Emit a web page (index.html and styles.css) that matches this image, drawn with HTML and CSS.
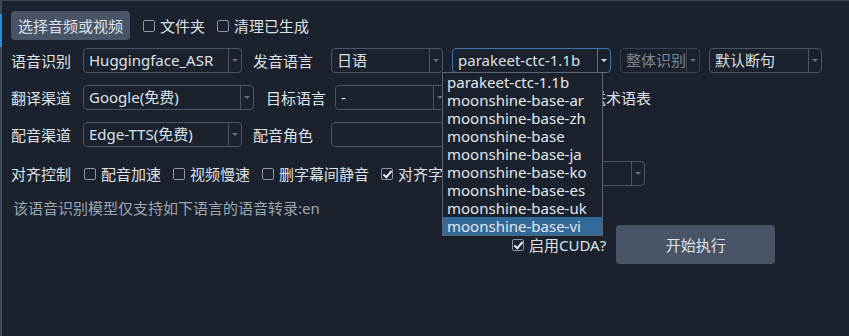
FILE: index.html
```html
<!DOCTYPE html>
<html lang="zh">
<head>
<meta charset="utf-8">
<link rel="stylesheet" href="styles.css">
</head>
<body>
<div class="app">
  <div class="row r1">
    <button class="btn pick">选择音频或视频</button>
    <label class="chk"><span class="box"></span>文件夹</label>
    <label class="chk"><span class="box"></span>清理已生成</label>
  </div>
  <div class="row r2">
    <span class="lbl">语音识别</span>
    <div class="combo w159">Huggingface_ASR<i class="arr"></i></div>
    <span class="lbl l2">发音语言</span>
    <div class="combo w112">日语<i class="arr"></i></div>
    <div class="combo w159 focus">parakeet-ctc-1.1b<i class="arr"></i></div>
    <div class="combo w80 disabled">整体识别<i class="arr"></i></div>
    <div class="combo w113">默认断句<i class="arr"></i></div>
  </div>
  <div class="row r3">
    <span class="lbl">翻译渠道</span>
    <div class="combo w171">Google(免费)<i class="arr"></i></div>
    <span class="lbl l3">目标语言</span>
    <div class="combo w112">-<i class="arr"></i></div>
    <label class="chk glossary"><span class="box"></span>发送术语表</label>
  </div>
  <div class="row r4">
    <span class="lbl">配音渠道</span>
    <div class="combo w159">Edge-TTS(免费)<i class="arr"></i></div>
    <span class="lbl l2">配音角色</span>
    <div class="combo w200"><i class="arr"></i></div>
  </div>
  <div class="row r5">
    <span class="lbl">对齐控制</span>
    <label class="chk"><span class="box"></span>配音加速</label>
    <label class="chk"><span class="box"></span>视频慢速</label>
    <label class="chk"><span class="box"></span>删字幕间静音</label>
    <label class="chk"><span class="box on"></span>对齐字幕时长</label>
    <div class="combo w146"><i class="arr"></i></div>
  </div>
  <div class="row r6">
    <span class="hint">该语音识别模型仅支持如下语言的语音转录:en</span>
  </div>
  <div class="row r7">
    <label class="chk cuda"><span class="box on"></span>启用CUDA?</label>
    <button class="btn run">开始执行</button>
  </div>

  <ul class="popup">
    <li>parakeet-ctc-1.1b</li>
    <li>moonshine-base-ar</li>
    <li>moonshine-base-zh</li>
    <li>moonshine-base</li>
    <li>moonshine-base-ja</li>
    <li>moonshine-base-ko</li>
    <li>moonshine-base-es</li>
    <li>moonshine-base-uk</li>
    <li class="sel">moonshine-base-vi</li>
  </ul>
</div>
</body>
</html>
```
FILE: styles.css
```css
* { box-sizing: border-box; }
html, body { margin: 0; padding: 0; background: #1b222d; }
body {
  font-family: "Noto Sans", "Noto Sans CJK SC", sans-serif;
  font-size: 15px;
  color: #dde1e7;
}
.app {
  position: relative;
  height: 336px;
  border-top: 1px solid #3a4453;
  border-left: 2px solid #3d4858;
  padding: 10px 0 0 9px;
  display: flex;
  flex-direction: column;
}
.app::before {
  content: "";
  position: absolute;
  left: -2px;
  top: 13px;
  width: 2px;
  height: 33px;
  background: #2c8dd6;
}
.row {
  display: flex;
  align-items: center;
}
.r1 { height: 29px; margin-bottom: 8px; }
.r2 { height: 25px; margin-bottom: 12px; }
.r3 { height: 25px; margin-bottom: 12px; }
.r4 { height: 25px; margin-bottom: 14px; }
.r5 { height: 25px; margin-bottom: 11px; }
.r6 { height: 20px; margin-bottom: 8px; }
.r7 { height: 39px; padding-left: 500px; }

.btn {
  font: inherit;
  color: #dde1e7;
  background: #4a5467;
  border: none;
  border-radius: 4px;
  padding: 0;
}
.pick { width: 119px; height: 29px; margin-right: 12px; }
.run { width: 159px; height: 39px; margin-left: 10px; }

.chk {
  display: flex;
  align-items: center;
  white-space: nowrap;
  margin-right: 11px;
  line-height: 20px;
}
.cuda { margin-right: 0; }
.box {
  width: 12px;
  height: 12px;
  border: 1px solid #8b95a3;
  border-radius: 2px;
  margin: 0 5px 0 1px;
  position: relative;
  flex: none;
}
.box.on::after {
  content: "";
  position: absolute;
  left: 3px;
  top: 0px;
  width: 3px;
  height: 7px;
  border: solid #e6e9ee;
  border-width: 0 2px 2px 0;
  transform: rotate(40deg);
}

.lbl { width: 62px; margin-right: 10px; white-space: nowrap; }
.l2 { margin-left: 2px; margin-right: 18px; width: 60px; }
.l3 { margin-left: 3px; margin-right: 9px; width: 60px; }

.combo {
  position: relative;
  height: 25px;
  border: 1px solid #4b5566;
  border-radius: 4px;
  padding: 0 18px 0 5px;
  line-height: 23px;
  white-space: nowrap;
  overflow: hidden;
  margin-right: 9px;
  flex: none;
}
.arr {
  position: absolute;
  right: 0;
  top: 0;
  bottom: 0;
  width: 13px;
  border-left: 1px solid #4b5566;
}
.arr::after {
  content: "";
  position: absolute;
  left: 3px;
  top: 10px;
  border-left: 3px solid transparent;
  border-right: 3px solid transparent;
  border-top: 3px solid #646e7c;
}
.w159 { width: 159px; }
.w112 { width: 112px; }
.w80 { width: 80px; }
.w113 { width: 113px; }
.w171 { width: 171px; }
.w200 { width: 200px; }
.w146 { width: 146px; }
.focus { border-color: #3b76ad; }
.focus .arr { border-left-color: #3b76ad; }
.focus .arr::after { border-top-color: #d8dde4; }
.disabled { color: #7d8693; border-color: #38424f; }
.disabled .arr { border-left-color: #38424f; }
.glossary { margin-left: 102px; }

.hint { color: #9ea6b1; margin-left: 2px; }

.popup {
  position: absolute;
  left: 440px;
  top: 71px;
  width: 161px;
  margin: 0;
  padding: 0;
  list-style: none;
  background: #1b222d;
  border: 1px solid #5a6576;
  font-family: "Noto Sans", sans-serif;
}
.popup li {
  height: 18px;
  line-height: 18px;
  padding-left: 4px;
  color: #e4e7ec;
  white-space: nowrap;
}
.popup li.sel { background: #336a99; }
```
